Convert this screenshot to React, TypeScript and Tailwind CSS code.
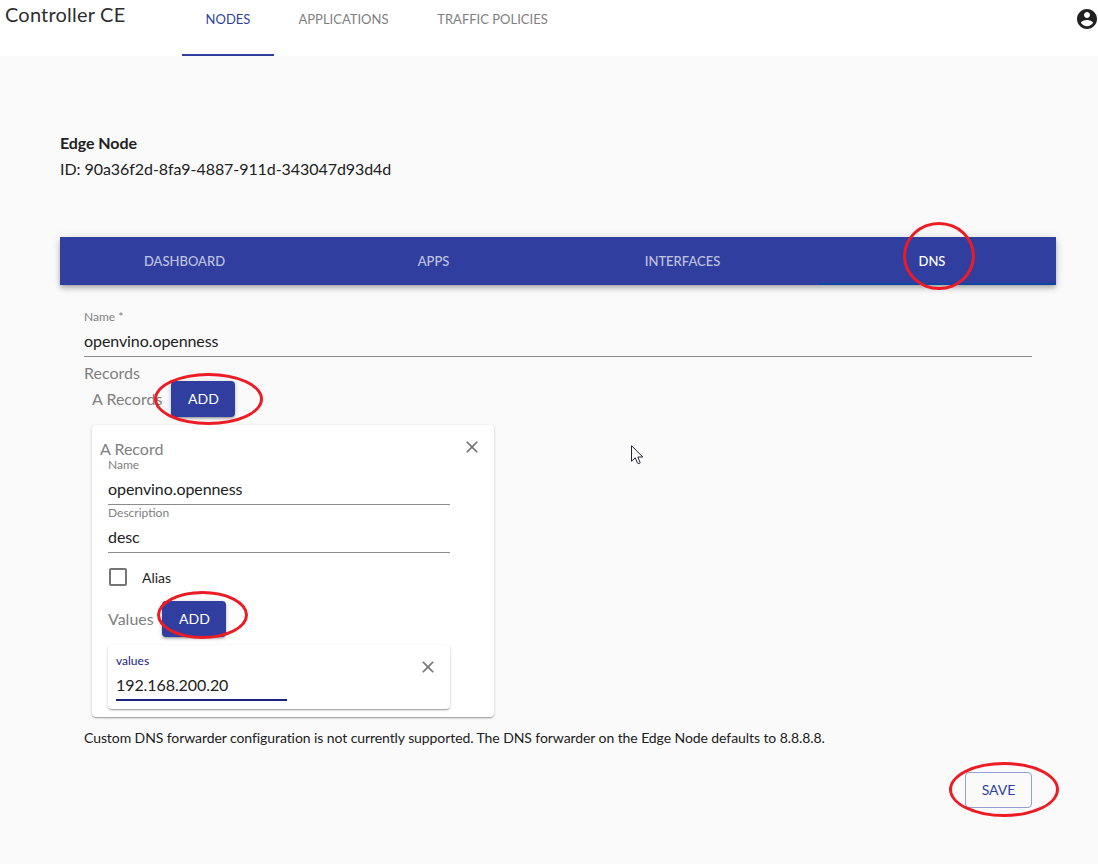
import React from "react";

function CloseIcon() {
  return (
    <svg viewBox="0 0 24 24" className="h-5 w-5 shrink-0" fill="#757575">
      <path d="M19 6.41L17.59 5 12 10.59 6.41 5 5 6.41 10.59 12 5 17.59 6.41 19 12 13.41 17.59 19 19 17.59 13.41 12z" />
    </svg>
  );
}

function Field({ label, value }: { label: string; value: string }) {
  return (
    <div className="h-12 border-b border-[#8c8c8c]">
      <div className="h-4 text-xs leading-4 text-[#808080]">{label}</div>
      <div className="mt-1.5 text-base leading-5 tracking-[-0.08px]">{value}</div>
    </div>
  );
}

function AddButton() {
  return (
    <button className="h-9 w-16 rounded bg-[#303f9f] pb-px pl-px text-sm font-normal text-white shadow-[0_1px_5px_rgba(0,0,0,0.2),0_2px_2px_rgba(0,0,0,0.14),0_3px_1px_-2px_rgba(0,0,0,0.12)]">
      ADD
    </button>
  );
}

function Ring({ className }: { className: string }) {
  return <div className={`pointer-events-none absolute rounded-[50%] border-[3px] border-[#ed1c24] ${className}`} />;
}

const cardShadow =
  "shadow-[0_1px_3px_rgba(0,0,0,0.2),0_1px_1px_rgba(0,0,0,0.14),0_2px_1px_-1px_rgba(0,0,0,0.12)]";

export default function App() {
  return (
    <div className="relative h-[864px] w-[1098px] overflow-hidden bg-[#fafafa] font-['Lato',sans-serif] text-[#212121]">
      <header className="flex h-14 bg-white">
        <h1 className="w-[182px] pl-[5px] text-xl leading-7 font-normal tracking-[0.2px] text-[#2e2e2e]">Controller CE</h1>
        <nav className="flex text-center text-[13px] leading-[38px] text-[#808080]">
          <a className="w-[92px] border-b-2 border-[#303f9f] text-[#303f9f]">NODES</a>
          <a className="w-[139px]">APPLICATIONS</a>
          <a className="w-[159px]">TRAFFIC POLICIES</a>
        </nav>
        <svg viewBox="0 0 24 24" className="mt-[7px] mr-[-1px] ml-auto h-6 w-6" fill="#212121">
          <path d="M12 2C6.48 2 2 6.48 2 12s4.48 10 10 10 10-4.48 10-10S17.52 2 12 2zm0 3c1.66 0 3 1.34 3 3s-1.34 3-3 3-3-1.34-3-3 1.34-3 3-3zm0 14.2c-2.5 0-4.71-1.28-6-3.22.03-1.99 4-3.08 6-3.08 1.99 0 5.97 1.09 6 3.08-1.29 1.94-3.5 3.22-6 3.22z" />
        </svg>
      </header>

      <main className="pr-[42px] pl-[60px]">
        <section className="h-[181px] pt-[74px] text-base leading-[26px]">
          <h2 className="font-bold tracking-[-0.08px]">Edge Node</h2>
          <p className="tracking-[-0.065px]">ID: 90a36f2d-8fa9-4887-911d-343047d93d4d</p>
        </section>

        <nav className="grid h-12 grid-cols-[249px_249px_249px_249px] bg-[#303f9f] text-center text-[13px] leading-12 font-medium text-white/70 shadow-[0_2px_4px_-1px_rgba(0,0,0,0.2),0_4px_5px_rgba(0,0,0,0.14),0_1px_10px_rgba(0,0,0,0.12)]">
          <a>DASHBOARD</a>
          <a>APPS</a>
          <a>INTERFACES</a>
          <a className="ml-3 h-12 border-b-2 border-[#0d47a1] pr-[11px] text-white">DNS</a>
        </nav>

        <form className="px-6 pt-6">
          <Field label="Name *" value="openvino.openness" />
          <div className="pt-[3px] text-base leading-[26px] text-[#808080]">Records</div>
          <div className="-mt-[5px] flex h-9 items-center gap-2 pl-2">
            <span className="w-[71px] text-base whitespace-nowrap text-[#808080]">A Records</span>
            <AddButton />
          </div>

          <div className={`mt-2 ml-2 h-[292px] w-[402px] rounded bg-white px-2 pt-3 ${cardShadow}`}>
            <div className="flex h-5 items-center justify-between pr-1">
              <span className="pt-[3px] text-base text-[#808080]">A Record</span>
              <CloseIcon />
            </div>
            <div className="w-[350px] pl-2">
              <Field label="Name" value="openvino.openness" />
              <Field label="Description" value="desc" />
              <div className="flex h-12 items-center text-sm">
                <span className="ml-px h-[18px] w-[18px] rounded-[2px] border-2 border-[#757575]" />
                <span className="ml-[15px] pt-px">Alias</span>
              </div>
              <div className="flex h-9 items-center">
                <span className="w-[54px] text-base text-[#808080]">Values</span>
                <AddButton />
              </div>
              <div className={`mt-2 flex h-16 justify-between rounded pt-2 pr-3 pl-2 ${cardShadow}`}>
                <div className="h-12 w-[171px] border-b-2 border-[#1a237e]">
                  <div className="text-xs leading-4 text-[#1a237e]">values</div>
                  <div className="mt-1.5 text-base leading-5 tracking-[-0.08px]">192.168.200.20</div>
                </div>
                <div className="pt-1">
                  <CloseIcon />
                </div>
              </div>
            </div>
          </div>

          <p className="mt-[11px] text-sm leading-5 tracking-[-0.08px]">
            Custom DNS forwarder configuration is not currently supported. The DNS forwarder on the Edge Node defaults to 8.8.8.8.
          </p>
          <div className="mt-6 flex justify-end">
            <button className="h-9 w-[67px] rounded border border-[#979fcf] text-sm text-[#303f9f]">SAVE</button>
          </div>
        </form>
      </main>

      <Ring className="top-[222px] left-[903px] h-[68px] w-[72px]" />
      <Ring className="top-[373px] left-[154px] h-[52px] w-[109px]" />
      <Ring className="top-[591px] left-[157px] h-[48px] w-[91px]" />
      <Ring className="top-[762px] left-[949px] h-[55px] w-[110px]" />
      <svg viewBox="0 0 13 20" className="absolute top-[445px] left-[631px] h-5 w-[13px]" fill="white" stroke="#222233">
        <path d="M.5.7V16.3L4.2 12.8 6.6 18.2Q7.7 19.2 9.2 17.8L6.8 12H11.8Z" />
      </svg>
    </div>
  );
}
